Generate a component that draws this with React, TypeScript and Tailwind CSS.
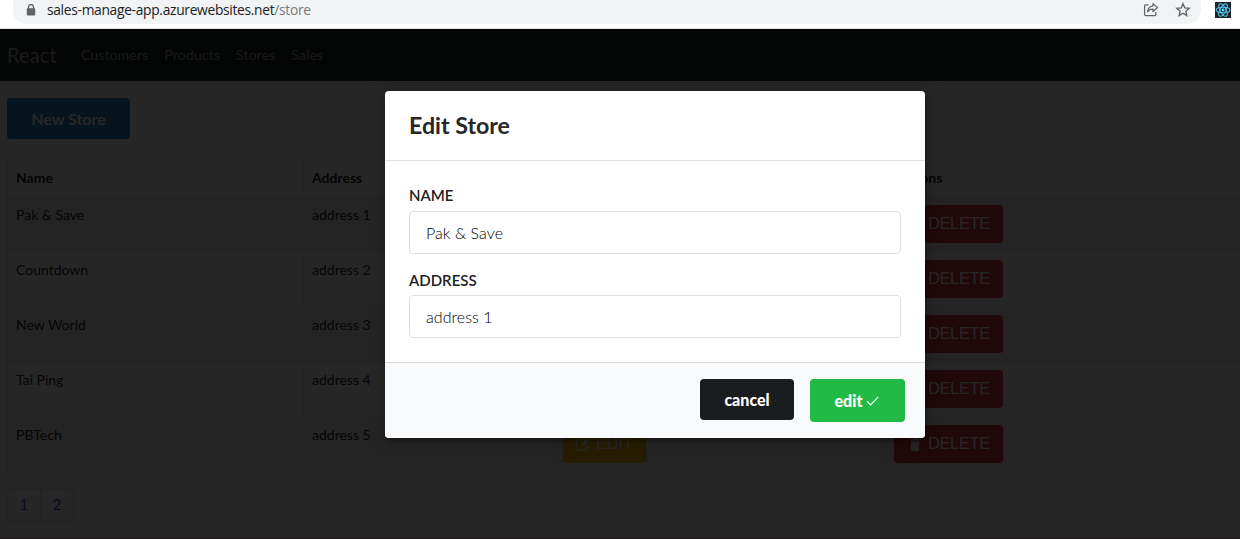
import React from "react";

const stores = [
  { name: "Pak & Save", address: "address 1" },
  { name: "Countdown", address: "address 2" },
  { name: "New World", address: "address 3" },
  { name: "Tai Ping", address: "address 4" },
  { name: "PBTech", address: "address 5" },
];

function ReactLogo() {
  return (
    <svg className="size-4 shrink-0" viewBox="0 0 16 16" fill="none">
      <rect width="16" height="16" fill="#20232a" />
      <g stroke="#4fc3e8" strokeWidth="1.05">
        <ellipse cx="8" cy="8" rx="6.9" ry="2.8" />
        <ellipse cx="8" cy="8" rx="6.9" ry="2.8" transform="rotate(60 8 8)" />
        <ellipse cx="8" cy="8" rx="6.9" ry="2.8" transform="rotate(120 8 8)" />
      </g>
      <circle cx="8" cy="8" r="1.4" fill="#61dafb" />
    </svg>
  );
}

function AddressBar() {
  return (
    <div className="flex h-[29px] items-start border-b border-[#dde3e0] bg-white pl-[13px]">
      <div className="flex h-6 w-[1188px] items-start rounded-b-[14px] bg-[#f1f3f4]">
        <svg className="mt-[4px] ml-[13px] h-3 w-[10px]" viewBox="0 0 10 12">
          <path d="M2.5 5V3a2.5 2.5 0 0 1 5 0v2" fill="none" stroke="#5f6368" strokeWidth="1.3" />
          <rect x="0.8" y="4.3" width="8.4" height="7.2" rx="0.9" fill="#5f6368" />
        </svg>
        <div className="mt-px ml-[11px] text-[13.8px] leading-[18px] whitespace-nowrap text-[#202124] font-['Open_Sans',sans-serif] tracking-[-0.31px]">
          sales-manage-app.azurewebsites.net<span className="text-[#75797d]">/store</span>
        </div>
        <div className="mt-[2px] mr-[10px] ml-auto flex items-center gap-[16px]">
          <svg className="size-4" viewBox="0 0 16 16" fill="none" stroke="#5f6368" strokeWidth="1.25" strokeLinejoin="round">
            <path d="M5.5 2.8H3A1.4 1.4 0 0 0 1.6 4.2v8A1.4 1.4 0 0 0 3 13.6h8.4a1.4 1.4 0 0 0 1.4-1.4v-2.1" />
            <path d="M10 1.6 14.6 5.6 10 9.5V7.2C7.5 7.1 5.8 8 4.6 9.8 4.9 6.7 6.8 4.3 10 3.9Z" />
          </svg>
          <svg className="size-4" viewBox="0 0 16 16" fill="none" stroke="#5f6368" strokeWidth="1.3">
            <path d="m8 1.7 1.75 4.15 4.5.38-3.42 2.95 1.03 4.4L8 11.25l-3.86 2.33 1.03-4.4L1.75 6.23l4.5-.38Z" />
          </svg>
        </div>
      </div>
      <div className="mt-[2px] ml-[14px]"><ReactLogo /></div>
    </div>
  );
}

function EditIcon() {
  return (
    <svg className="mt-[2px] h-[14px] w-[15px]" viewBox="0 0 16 15" fill="none" stroke="currentColor">
      <path d="M8.5 3H2.5A1.5 1.5 0 0 0 1 4.5v8A1.5 1.5 0 0 0 2.5 14h8a1.5 1.5 0 0 0 1.5-1.5V9" strokeWidth="1.7" />
      <path d="m5 10 .5-3L11 1.5 13.5 4 8 9.5Z" fill="currentColor" stroke="none" />
      <path d="m11.8.8 1-.8L15.5 2.5l-1 1Z" fill="currentColor" stroke="none" />
    </svg>
  );
}

function TrashIcon() {
  return (
    <svg className="mt-[2px] h-[13px] w-[10px]" viewBox="0 0 10 13" fill="currentColor">
      <path d="M0 1.2h2.8L3.5.3h3l.7.9H10v1.2H0ZM.9 3.4h8.2v8.2c0 .8-.5 1.3-1.3 1.3H2.2c-.8 0-1.3-.5-1.3-1.3Z" />
    </svg>
  );
}

const cell = "border border-[#ececec] px-2 py-2 text-left align-top";

function StoreTable() {
  return (
    <table className="mt-5 w-[1240px] table-fixed border-collapse text-[14px] leading-5">
      <colgroup>
        <col className="w-[296px]" />
        <col className="w-[251px]" />
        <col className="w-[331px]" />
        <col />
      </colgroup>
      <thead>
        <tr className="h-[37px] font-bold">
          <th className={cell}>Name</th>
          <th className={cell}>Address</th>
          <th className={cell}>Actions</th>
          <th className={cell + " pl-[9px]"}>Actions</th>
        </tr>
      </thead>
      <tbody>
        {stores.map((s) => (
          <tr key={s.name} className="h-[55px] odd:bg-[#f2f2f2]">
            <td className={cell}>{s.name}</td>
            <td className={cell}>{s.address}</td>
            <td className={cell}>
              <button className="flex h-[38px] w-[83px] items-center gap-[5px] rounded bg-[#ffc107] pb-[2px] pl-[13px] text-[16.5px] text-white font-['Liberation_Sans',sans-serif] tracking-[-0.2px]">
                <EditIcon />EDIT
              </button>
            </td>
            <td className={cell}>
              <button className="flex h-[38px] w-[109px] items-center gap-[8px] rounded bg-[#dc3545] pb-[2px] pl-4 text-[16.5px] text-white font-['Liberation_Sans',sans-serif] tracking-[-0.4px]">
                <TrashIcon />DELETE
              </button>
            </td>
          </tr>
        ))}
      </tbody>
    </table>
  );
}

function Page() {
  return (
    <div className="h-[510px] overflow-hidden bg-white">
      <nav className="flex h-[52px] items-center bg-[#1d2724] pl-[7px] text-[#aaaaaa]">
        <span className="pt-px text-[20.3px]">React</span>
        <div className="ml-6 flex gap-4 pb-px text-[14.3px]">
          <span>Customers</span><span>Products</span><span>Stores</span><span>Sales</span>
        </div>
      </nav>
      <main className="pt-[17px] pl-[7px]">
        <button className="block h-[41px] w-[123px] rounded bg-[#2185d0] text-[16px] font-bold text-white">New Store</button>
        <StoreTable />
        <div className="mt-4 flex h-[34px] w-[67px] rounded border border-[#e5e5e5] text-[14.4px] text-[#1d55dd]">
          <a className="flex w-[33px] items-center justify-center border-r border-[#e5e5e5] pb-px">1</a>
          <a className="flex flex-1 items-center justify-center pb-px">2</a>
        </div>
      </main>
    </div>
  );
}

const field = "block h-[43px] w-full rounded-[4px] border border-[#dededf] bg-white px-4 text-[16px] font-light tracking-[0.06px] text-black outline-none";
const label = "block h-5 text-[15px] leading-5 font-semibold text-[#212121]";

function EditModal() {
  return (
    <section className="mt-[62px] ml-[385px] flex h-[347px] w-[540px] flex-col overflow-hidden rounded-[4px] bg-white shadow-[1px_3px_3px_0_rgba(0,0,0,0.2),1px_3px_15px_2px_rgba(0,0,0,0.2)]">
      <header className="flex h-[70px] items-center border-b border-[#dededf] px-6 text-[23.2px] font-bold text-[#272727]">Edit Store</header>
      <div className="flex-1 px-6 pt-6">
        <label className={label}>NAME</label>
        <input className={field + " mt-[6px]"} defaultValue="Pak & Save" />
        <label className={label + " mt-[16px]"}>ADDRESS</label>
        <input className={field + " mt-[5px]"} defaultValue="address 1" />
      </div>
      <footer className="flex h-[76px] items-start gap-4 border-t border-[#d7d8da] bg-[#f9fafb] pt-4 pl-[315px] text-[16px] font-black text-white">
        <button className="h-[41px] w-[94px] rounded bg-[#1b1c1d]">cancel</button>
        <button className="flex h-[43px] w-[95px] items-center justify-center gap-1 rounded bg-[#21ba45] pr-px">
          edit
          <svg className="mt-px h-[10px] w-[13px]" viewBox="0 0 13 10" fill="none" stroke="white" strokeWidth="1.2">
            <path d="m1 5.3 3.6 3.5L12.2.8" />
          </svg>
        </button>
      </footer>
    </section>
  );
}

export default function App() {
  return (
    <div className="relative h-[539px] w-[1240px] overflow-hidden font-['Lato',sans-serif] text-[#212529]">
      <AddressBar />
      <Page />
      <div className="absolute inset-x-0 top-[29px] bottom-0 border-b border-[#211d1f] bg-black/85">
        <EditModal />
      </div>
    </div>
  );
}
